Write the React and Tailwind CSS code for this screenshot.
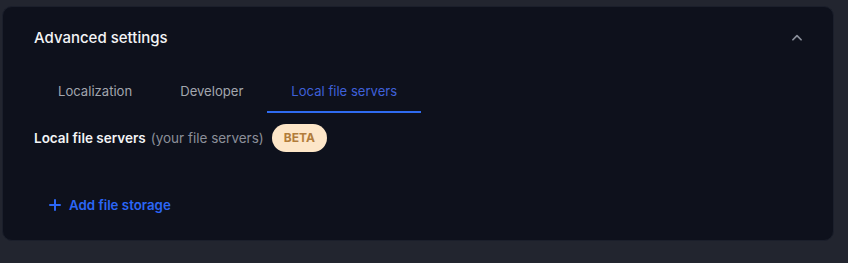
import React, { useState } from "react";

const tabs = ["Localization", "Developer", "Local file servers"];

export default function App() {
  const [active, setActive] = useState(2);
  const [open, setOpen] = useState(true);

  return (
    <div className="w-[848px] h-[263px] bg-[#22252f] pt-[6px] pl-[2px]" style={{ fontFamily: "Inter, 'Noto Sans', sans-serif" }}>
      <div className="w-[832px] h-[235px] bg-[#0e111c] rounded-[10px] border border-[#1b1f2b] pt-[19px] pl-[31px] pr-[26px]">
        <div className="flex items-center justify-between h-6">
          <h2 className="text-[15px] font-medium text-[#f3f4f6] leading-6">Advanced settings</h2>
          <button onClick={() => setOpen(!open)} className="w-5 h-5 flex items-center justify-center text-[#8a8f9a]">
            <svg width="14" height="14" viewBox="0 0 24 24" fill="none" stroke="currentColor" strokeWidth="3" strokeLinecap="round" strokeLinejoin="round">
              <path d="M5 15l7-7 7 7" />
            </svg>
          </button>
        </div>

        <div className="flex mt-[23px]">
          {tabs.map((t, i) => (
            <button
              key={t}
              onClick={() => setActive(i)}
              className={
                "px-6 pt-[8px] pb-[10px] text-[13.1px] leading-5 border-b-2 " +
                (i === active ? "text-[#3f60d8] border-[#2f6bf0]" : "text-[#a2a6ae] border-transparent")
              }
            >
              {t}
            </button>
          ))}
        </div>

        <div className="flex items-center mt-[11px] h-7 text-[13.5px]">
          <span className="font-semibold text-[#f3f4f6]">Local file servers</span>
          <span className="ml-[5px] text-[#8b8f99]">(your file servers)</span>
          <span className="ml-[8px] h-7 px-3 rounded-full bg-[#fde6c8] text-[#b27c3a] text-[12px] font-bold flex items-center">BETA</span>
        </div>

        <button className="flex items-center gap-2 mt-[43px] ml-[15px] text-[13.3px] font-semibold leading-5 text-[#2b66f6]">
          <svg width="12" height="12" viewBox="0 0 12 12" fill="none" stroke="currentColor" strokeWidth="2" strokeLinecap="round">
            <path d="M6 1v10M1 6h10" />
          </svg>
          Add file storage
        </button>
      </div>
    </div>
  );
}
